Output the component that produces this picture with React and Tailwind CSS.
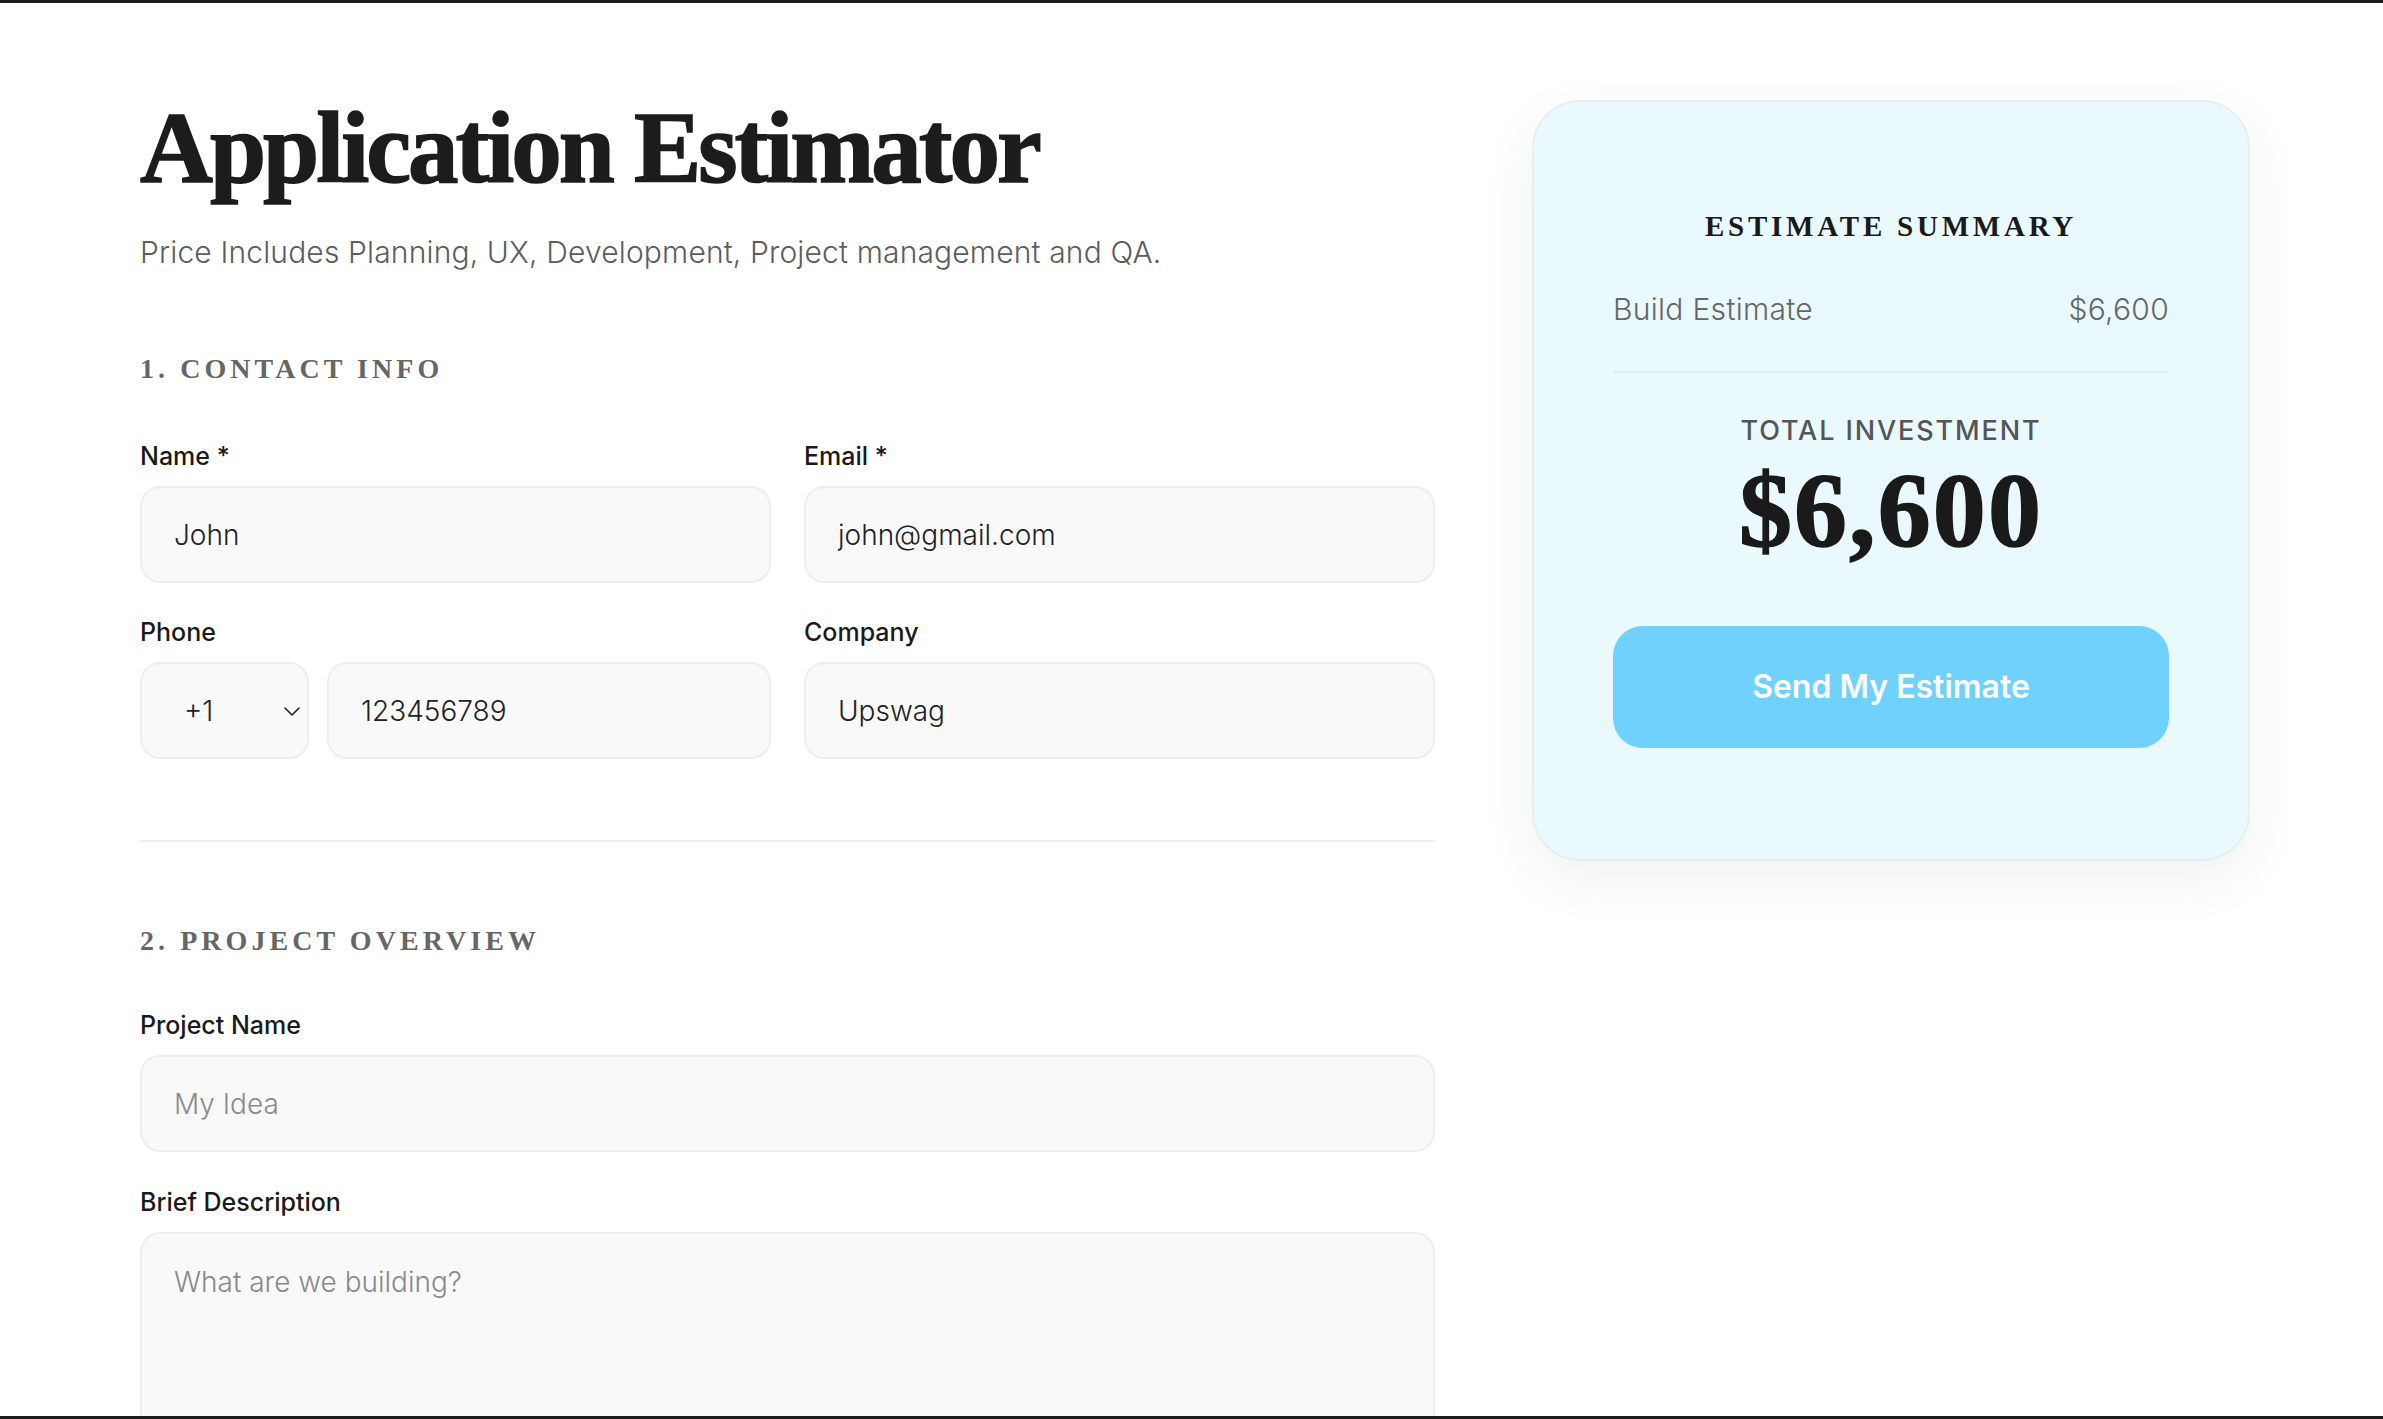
import React, { useState } from 'react';

const sans = { fontFamily: 'Inter, "Noto Sans", sans-serif' };
const serif = { fontFamily: '"Liberation Serif", "DejaVu Serif", serif' };

const Label = ({ children }) => (
  <label className="block text-[25px] leading-none font-medium text-[#1a1a1a]">{children}</label>
);

const inputCls =
  'w-full h-[97px] px-[32px] bg-[#f9f9f9] border-2 border-[#eeeeee] rounded-[20px] text-[28px] font-light text-[#222] placeholder:text-[#8a8a8a] outline-none';

const SectionTitle = ({ children }) => (
  <h2 className="text-[28px] leading-none font-bold tracking-[0.145em] text-[#666]" style={serif}>
    {children}
  </h2>
);

export default function App() {
  const [name, setName] = useState('John');
  const [email, setEmail] = useState('john@gmail.com');
  const [code, setCode] = useState('+1');
  const [phone, setPhone] = useState('123456789');
  const [company, setCompany] = useState('Upswag');
  const [projectName, setProjectName] = useState('');
  const [description, setDescription] = useState('');

  return (
    <div
      className="h-screen overflow-hidden bg-white border-t-[3px] border-b-[3px] border-[#1c1c1c]"
      style={sans}
    >
      <div className="flex items-start gap-[97px] pl-[140px] pt-[95px]">
        {/* form column */}
        <div className="w-[1295px] shrink-0">
          <h1
            className="text-[101px] leading-none font-bold tracking-[-0.03em] text-[#1c1c1c] [-webkit-text-stroke:1.5px_#1c1c1c]"
            style={serif}
          >
            Application Estimator
          </h1>
          <p className="mt-[38px] text-[30px] leading-none font-light tracking-[0.005em] text-[#5c5c5c]">
            Price Includes Planning, UX, Development, Project management and QA.
          </p>

          <div className="mt-[88px]">
            <SectionTitle>1. CONTACT INFO</SectionTitle>
          </div>

          <div className="mt-[61px] grid grid-cols-2 gap-x-[33px] gap-y-[37px]">
            <div>
              <Label>Name *</Label>
              <input className={`${inputCls} mt-[17px]`} value={name} onChange={(e) => setName(e.target.value)} />
            </div>
            <div>
              <Label>Email *</Label>
              <input className={`${inputCls} mt-[17px]`} value={email} onChange={(e) => setEmail(e.target.value)} />
            </div>
            <div>
              <Label>Phone</Label>
              <div className="mt-[17px] flex gap-[18px]">
                <div className="relative w-[169px] shrink-0">
                  <select
                    value={code}
                    onChange={(e) => setCode(e.target.value)}
                    className="w-full h-[97px] appearance-none pl-[42px] pr-[30px] bg-[#f9f9f9] border-2 border-[#eeeeee] rounded-[20px] text-[28px] font-light text-[#222] outline-none"
                  >
                    <option>+1</option>
                    <option>+44</option>
                    <option>+61</option>
                  </select>
                  <svg
                    className="pointer-events-none absolute right-[8px] top-1/2 -translate-y-1/2"
                    width="18"
                    height="12"
                    viewBox="0 0 18 12"
                    fill="none"
                  >
                    <path d="M2 3l7 7 7-7" stroke="#222" strokeWidth="1.6" strokeLinecap="round" strokeLinejoin="round" />
                  </svg>
                </div>
                <input className={inputCls} value={phone} onChange={(e) => setPhone(e.target.value)} />
              </div>
            </div>
            <div>
              <Label>Company</Label>
              <input className={`${inputCls} mt-[17px]`} value={company} onChange={(e) => setCompany(e.target.value)} />
            </div>
          </div>

          <div className="mt-[81px] h-[2px] bg-[#efefef]" />

          <div className="mt-[85px]">
            <SectionTitle>2. PROJECT OVERVIEW</SectionTitle>
          </div>

          <div className="mt-[58px]">
            <Label>Project Name</Label>
            <input
              className={`${inputCls} mt-[17px]`}
              placeholder="My Idea"
              value={projectName}
              onChange={(e) => setProjectName(e.target.value)}
            />
          </div>

          <div className="mt-[38px]">
            <Label>Brief Description</Label>
            <textarea
              className="mt-[17px] block w-full h-[300px] resize-none px-[32px] pt-[30px] bg-[#f9f9f9] border-2 border-[#eeeeee] rounded-[20px] text-[28px] leading-[1.3] font-light text-[#222] placeholder:text-[#8a8a8a] outline-none"
              placeholder="What are we building?"
              value={description}
              onChange={(e) => setDescription(e.target.value)}
            />
          </div>
        </div>

        {/* summary card */}
        <div className="w-[718px] shrink-0 mt-[2px] bg-[#eaf9fe] border-2 border-[#e7eef0] rounded-[48px] shadow-[0_18px_60px_rgba(0,0,0,0.06)] px-[79px] pt-[110px] pb-[111px]">
          <h3
            className="text-center text-[29px] leading-none font-bold tracking-[0.13em] text-[#1a1a1a]"
            style={serif}
          >
            ESTIMATE SUMMARY
          </h3>
          <div className="mt-[53px] flex items-center justify-between text-[30px] leading-none font-light tracking-[0.01em] text-[#666]">
            <span>Build Estimate</span>
            <span>$6,600</span>
          </div>
          <div className="mt-[47px] h-[2px] bg-[#dbeef3]" />
          <div className="mt-[44px] text-center text-[27px] leading-none font-medium tracking-[0.07em] text-[#555]">
            TOTAL INVESTMENT
          </div>
          <div
            className="mt-[14px] text-center text-[106px] leading-none font-bold tracking-[0.02em] text-[#1a1a1a] [-webkit-text-stroke:1.5px_#1a1a1a]"
            style={serif}
          >
            $6,600
          </div>
          <button
            type="button"
            className="mt-[62px] w-full h-[122px] rounded-[30px] bg-[#6fd1fc] text-white text-[32px] font-semibold"
          >
            Send My Estimate
          </button>
        </div>
      </div>
    </div>
  );
}
